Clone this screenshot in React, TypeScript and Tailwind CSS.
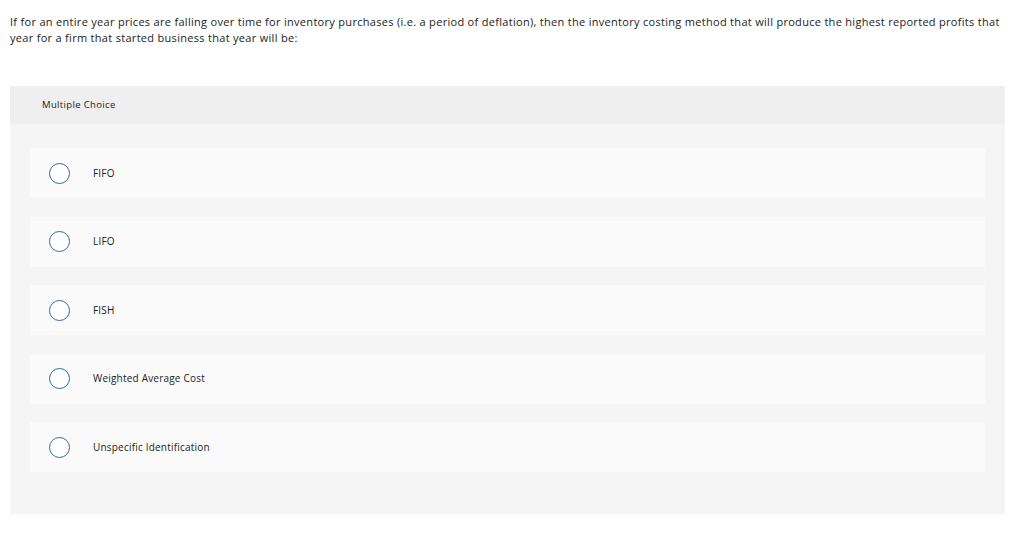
import React from 'react';

const OPTIONS = ['FIFO', 'LIFO', 'FISH', 'Weighted Average Cost', 'Unspecific Identification'];

const App: React.FC = () => {
  return (
    <div className="min-h-screen bg-white text-[#222] font-['Open_Sans','Liberation_Sans',sans-serif]">
      {/* Question */}
      <p className="px-[10px] pt-[14px] text-[11px] leading-[16px] tracking-[0.3px]">
        If for an entire year prices are falling over time for inventory purchases (i.e. a period of deflation), then the inventory costing method that will produce the highest reported profits that year for a firm that started business that year will be:
      </p>

      {/* Choices panel */}
      <div className="mx-[10px] mt-[40px] w-[995px] bg-[#f5f5f5]">
        <div className="h-[38px] bg-[#efefef] pl-[32px] flex items-center text-[9.5px] tracking-[0.35px] text-[#222]">
          Multiple Choice
        </div>
        <div className="px-[20px] pt-[24px] pb-[42px] flex flex-col gap-[18.5px]">
          {OPTIONS.map((opt) => (
            <label key={opt} className="h-[50px] bg-[#fafafa] flex items-center cursor-pointer">
              <span className="ml-[19px] w-[21px] h-[21px] rounded-full border border-[#2f6aa3] bg-white" />
              <span className="ml-[23px] text-[10px] tracking-[0.2px] text-[#222]">{opt}</span>
            </label>
          ))}
        </div>
      </div>
    </div>
  );
};

export default App;
